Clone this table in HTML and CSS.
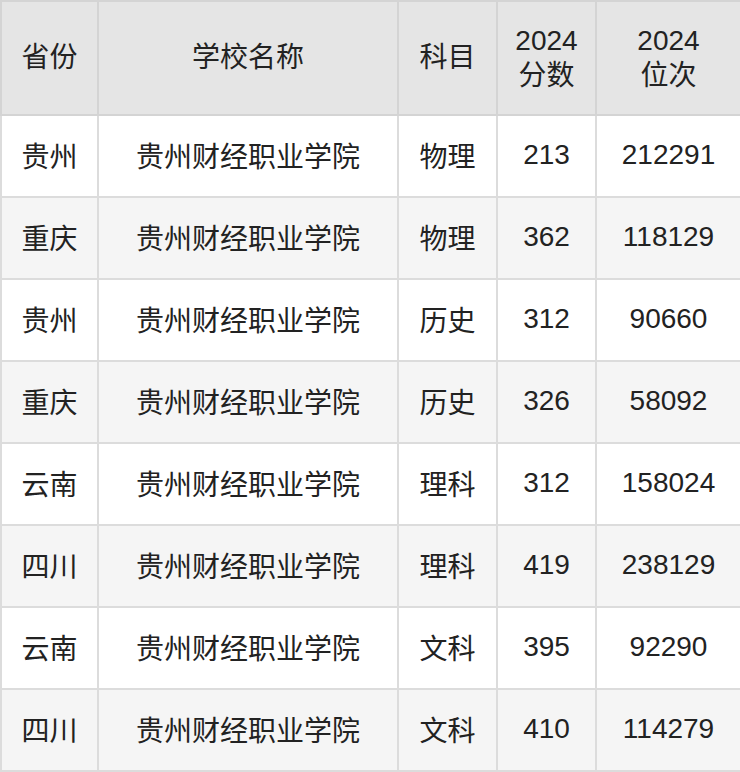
FILE: index.html
```html
<!DOCTYPE html>
<html lang="zh">
<head>
<meta charset="utf-8">
<link rel="stylesheet" href="styles.css">
</head>
<body>
<table class="score-table">
  <colgroup>
    <col class="c1"><col class="c2"><col class="c3"><col class="c4"><col class="c5">
  </colgroup>
  <thead>
    <tr><th>省份</th><th>学校名称</th><th>科目</th><th>2024<br>分数</th><th>2024<br>位次</th></tr>
  </thead>
  <tbody>
    <tr><td>贵州</td><td>贵州财经职业学院</td><td>物理</td><td>213</td><td>212291</td></tr>
    <tr><td>重庆</td><td>贵州财经职业学院</td><td>物理</td><td>362</td><td>118129</td></tr>
    <tr><td>贵州</td><td>贵州财经职业学院</td><td>历史</td><td>312</td><td>90660</td></tr>
    <tr><td>重庆</td><td>贵州财经职业学院</td><td>历史</td><td>326</td><td>58092</td></tr>
    <tr><td>云南</td><td>贵州财经职业学院</td><td>理科</td><td>312</td><td>158024</td></tr>
    <tr><td>四川</td><td>贵州财经职业学院</td><td>理科</td><td>419</td><td>238129</td></tr>
    <tr><td>云南</td><td>贵州财经职业学院</td><td>文科</td><td>395</td><td>92290</td></tr>
    <tr><td>四川</td><td>贵州财经职业学院</td><td>文科</td><td>410</td><td>114279</td></tr>
  </tbody>
</table>
</body>
</html>
```
FILE: styles.css
```css
html, body {
  margin: 0;
  padding: 0;
  background: #fff;
}
.score-table {
  border-collapse: collapse;
  width: 740px;
  table-layout: fixed;
  font-family: "Liberation Sans", "Noto Sans CJK SC", sans-serif;
  font-size: 28px;
  color: #222;
}
.c1 { width: 97px; }
.c2 { width: 300px; }
.c3 { width: 99px; }
.c4 { width: 99px; }
.c5 { width: 145px; }
.score-table th,
.score-table td {
  border: 2px solid #dcdcdc;
  text-align: center;
  vertical-align: middle;
  padding: 0;
}
.score-table th {
  background: #e5e5e5;
  font-weight: normal;
  height: 111px;
  line-height: 35px;
  padding-bottom: 1px;
  border-color: #d4d4d4;
}
.score-table td {
  height: 77px;
  padding-bottom: 3px;
}
.score-table tbody tr:nth-child(even) td {
  background: #f5f5f5;
}
```
